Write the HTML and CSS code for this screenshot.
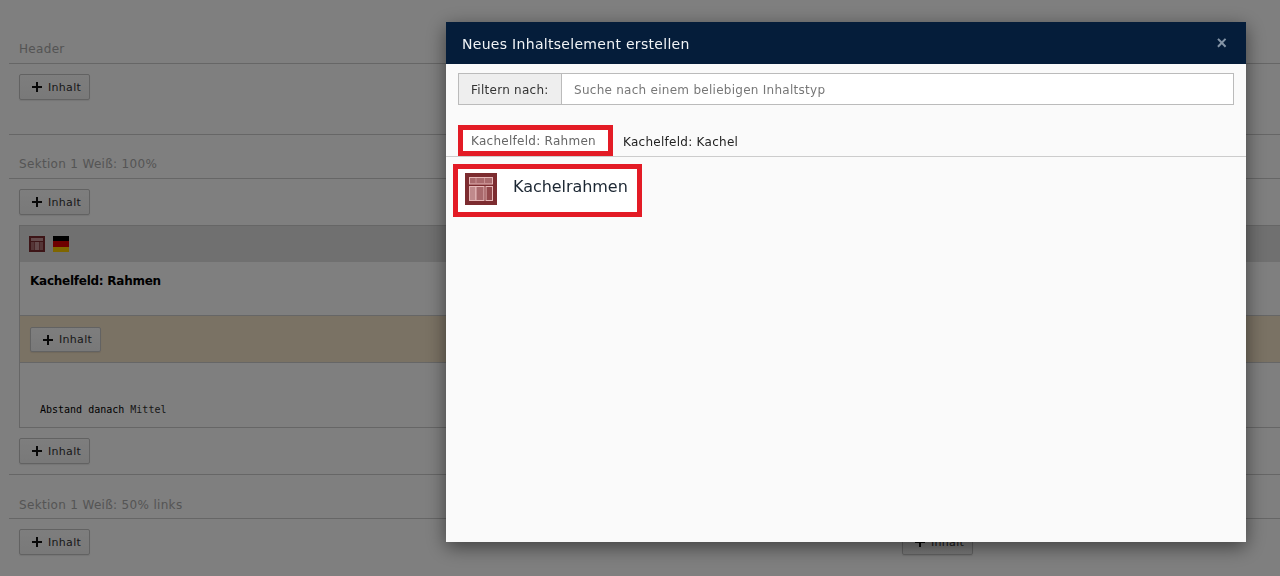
FILE: index.html
```html
<!DOCTYPE html>
<html lang="de">
<head>
<meta charset="utf-8">
<title>Neues Inhaltselement erstellen</title>
<link rel="stylesheet" href="styles.css">
</head>
<body>
<svg class="defs" width="0" height="0" aria-hidden="true">
  <symbol id="tile" viewBox="0 0 32 32">
    <rect width="32" height="32" fill="#7c2c30"/>
    <rect x="4.5" y="4.5" width="23" height="6.5" fill="#a9696c" stroke="#e6b9b9"/>
    <path d="M11 5v6M19.5 5v6" stroke="#c99092"/>
    <rect x="4.5" y="13.5" width="6.5" height="14" fill="#c08a8c" stroke="#e6b9b9"/>
    <rect x="11" y="13.5" width="8" height="14" fill="#a9696c" stroke="#e6b9b9"/>
    <rect x="21" y="13.5" width="6.5" height="14" fill="#93484b" stroke="#e6b9b9"/>
  </symbol>
  <symbol id="tile-small" viewBox="0 0 16 16">
    <rect width="16" height="16" fill="#7a2a2e"/>
    <rect x="2" y="2" width="12" height="3" fill="#c79497"/>
    <rect x="2" y="6" width="3.5" height="8" fill="#ab6c6f"/>
    <rect x="6" y="6" width="4" height="8" fill="#c79497"/>
    <rect x="10.5" y="6" width="3.5" height="8" fill="#ab6c6f"/>
  </symbol>
  <symbol id="plus" viewBox="0 0 10 10">
    <path d="M4 0h2v4h4v2H6v4H4V6H0V4h4z" fill="#111"/>
  </symbol>
</svg>

<div class="page">
  <div class="col">
    <section class="sec">
      <h2 class="sec-title sec-title-first">Header</h2>
      <div class="sec-body sec-body-empty">
        <button class="btn"><svg class="btn-plus"><use href="#plus"/></svg>Inhalt</button>
      </div>
    </section>
    <section class="sec">
      <h2 class="sec-title">Sektion 1 Weiß: 100%</h2>
      <div class="sec-body">
        <button class="btn"><svg class="btn-plus"><use href="#plus"/></svg>Inhalt</button>
        <article class="panel">
          <div class="panel-head">
            <svg class="ico"><use href="#tile-small"/></svg>
            <span class="flag"><i class="band band-k"></i><i class="band band-r"></i><i class="band band-g"></i></span>
          </div>
          <div class="panel-body"><strong>Kachelfeld: Rahmen</strong></div>
          <div class="panel-drop">
            <button class="btn btn-nested"><svg class="btn-plus"><use href="#plus"/></svg>Inhalt</button>
          </div>
          <div class="panel-foot"><span class="foot-key">Abstand danach</span> Mittel</div>
        </article>
        <button class="btn"><svg class="btn-plus"><use href="#plus"/></svg>Inhalt</button>
      </div>
    </section>
    <section class="sec sec-last">
      <h2 class="sec-title">Sektion 1 Weiß: 50% links</h2>
      <div class="sec-body">
        <button class="btn"><svg class="btn-plus"><use href="#plus"/></svg>Inhalt</button>
      </div>
    </section>
  </div>

  <div class="col">
    <section class="sec">
      <h2 class="sec-title sec-title-first">&nbsp;</h2>
      <div class="sec-body sec-body-empty">
        <button class="btn"><svg class="btn-plus"><use href="#plus"/></svg>Inhalt</button>
      </div>
    </section>
    <section class="sec">
      <h2 class="sec-title">&nbsp;</h2>
      <div class="sec-body">
        <button class="btn"><svg class="btn-plus"><use href="#plus"/></svg>Inhalt</button>
        <article class="panel">
          <div class="panel-head">
            <svg class="ico"><use href="#tile-small"/></svg>
          </div>
          <div class="panel-body"></div>
          <div class="panel-drop">
            <button class="btn btn-nested"><svg class="btn-plus"><use href="#plus"/></svg>Inhalt</button>
          </div>
          <div class="panel-foot">&nbsp;</div>
        </article>
        <button class="btn"><svg class="btn-plus"><use href="#plus"/></svg>Inhalt</button>
      </div>
    </section>
    <section class="sec sec-last">
      <h2 class="sec-title">&nbsp;</h2>
      <div class="sec-body">
        <button class="btn"><svg class="btn-plus"><use href="#plus"/></svg>Inhalt</button>
      </div>
    </section>
  </div>
</div>

<div class="backdrop"></div>

<div class="modal">
  <header class="modal-head">
    <span class="modal-title">Neues Inhaltselement erstellen</span>
    <span class="modal-close">×</span>
  </header>
  <div class="filter">
    <label class="filter-label">Filtern nach:</label>
    <span class="filter-input">Suche nach einem beliebigen Inhaltstyp</span>
  </div>
  <nav class="tabs">
    <span class="tab tab-active">Kachelfeld: Rahmen</span>
    <span class="tab">Kachelfeld: Kachel</span>
  </nav>
  <div class="pane">
    <div class="item">
      <svg class="item-ico"><use href="#tile"/></svg>
      <span class="item-name">Kachelrahmen</span>
    </div>
  </div>
</div>
</body>
</html>
```
FILE: styles.css
```css
html, body {
  margin: 0;
  height: 576px;
  overflow: hidden;
}
body {
  background: #fefefe;
  font-family: "DejaVu Sans", Verdana, sans-serif;
  font-size: 12px;
  letter-spacing: .27px;
  color: #222;
}
.defs { position: absolute; }

.page {
  display: grid;
  grid-template-columns: 873px 408px;
  gap: 10px;
  width: 1300px;
  padding-left: 9px;
}
.col { min-width: 0; }

.sec { border-bottom: 1px solid #ccc; }
.sec-last { border-bottom: 0; }
.sec-title {
  margin: 0;
  padding: 20px 10px 5px;
  border-bottom: 1px solid #ccc;
  font-size: 12px;
  font-weight: 400;
  line-height: 18px;
  letter-spacing: .32px;
  color: #aaa;
}
.sec-title-first { padding-top: 40px; color: #a8a8a8; }
.sec-body {
  display: flex;
  flex-direction: column;
  align-items: flex-start;
  gap: 10px;
  padding: 10px;
}
.sec-body-empty { padding-bottom: 34px; }
.sec-last .sec-title { padding-top: 21px; padding-bottom: 4px; }

.btn {
  display: flex;
  align-items: center;
  gap: 6px;
  box-sizing: border-box;
  width: 71px;
  height: 26px;
  padding: 0 0 0 12px;
  background: linear-gradient(#fcfcfc, #f2f2f2);
  border: 1px solid #c4c4c4;
  border-radius: 2px;
  box-shadow: 0 1px 1px rgba(0, 0, 0, .08);
  font: 11px/1 "DejaVu Sans", Verdana, sans-serif;
  letter-spacing: .3px;
  color: #333;
}
.btn-nested { height: 25px; }
.btn-plus { width: 10px; height: 10px; flex: none; }

.panel {
  box-sizing: border-box;
  align-self: stretch;
  height: 203px;
  border: 1px solid #ccc;
  background: #ffffff;
}
.panel-head {
  display: flex;
  gap: 8px;
  box-sizing: border-box;
  height: 36px;
  padding: 10px 9px;
  background: #e0e0e0;
}
.ico { width: 16px; height: 16px; }
.flag { display: flex; flex-direction: column; width: 16px; height: 16px; }
.band { flex: 1; }
.band-k { background: #000; }
.band-r { background: #d00; }
.band-g { background: #fc0; }

.panel-body {
  box-sizing: border-box;
  height: 53px;
  padding: 10px 10px 0;
  line-height: 18px;
  letter-spacing: -.25px;
  color: #000;
}
.panel-drop {
  box-sizing: border-box;
  height: 48px;
  padding: 11px 10px 0;
  background: #f5e4c8;
  border-top: 1px solid #ccc;
  border-bottom: 1px solid #ccc;
}
.panel-foot {
  padding: 38px 20px 0;
  font: 10px/18px "DejaVu Sans Mono", "Liberation Mono", monospace;
  letter-spacing: 0;
  color: #333;
}
.foot-key { color: #000; }

.backdrop {
  position: fixed;
  inset: 0;
  background: rgba(0, 0, 0, .5);
}

.modal {
  position: fixed;
  left: 446px;
  top: 22px;
  width: 800px;
  height: 520px;
  background: #fafafa;
  box-shadow: 0 5px 18px rgba(0, 0, 0, .5);
}
.modal-head {
  display: flex;
  justify-content: space-between;
  align-items: center;
  box-sizing: border-box;
  height: 42px;
  padding: 1px 19px 0 16px;
  background: #051d3a;
  color: #fff;
}
.modal-title { font-size: 14px; letter-spacing: .3px; color: #f0f3f6; }
.modal-close {
  font-family: "Liberation Sans", Arial, sans-serif;
  font-size: 18px;
  font-weight: 700;
  letter-spacing: 0;
  color: #8494a6;
}

.filter {
  display: flex;
  margin: 9px 12px 0;
  height: 32px;
  box-sizing: border-box;
  border: 1px solid #bbb;
  line-height: 32px;
}
.filter-label {
  box-sizing: border-box;
  width: 103px;
  padding-left: 12px;
  background: #eee;
  border-right: 1px solid #bbb;
  color: #333;
}
.filter-input {
  flex: 1;
  padding-left: 12px;
  background: #fff;
  color: #777;
}

.tabs {
  display: flex;
  align-items: stretch;
  margin-top: 20px;
  padding-left: 12px;
  height: 32px;
  box-sizing: border-box;
  border-bottom: 1px solid #ccc;
}
.tab {
  display: flex;
  align-items: center;
  padding: 2px 0 0 10px;
  color: #222;
}
.tab-active {
  box-sizing: border-box;
  width: 155px;
  height: 31px;
  padding: 1px 0 0 8px;
  background: #fff;
  border: 5px solid #e31b25;
  color: #666;
}

.pane { padding: 7px 7px 0; }
.item {
  display: flex;
  align-items: flex-start;
  gap: 16px;
  box-sizing: border-box;
  width: 189px;
  height: 53px;
  padding: 4px 0 0 7px;
  background: #fff;
  border: 5px solid #e31b25;
}
.item-ico { width: 32px; height: 32px; flex: none; }
.item-name {
  margin-top: 5px;
  font-size: 16px;
  line-height: 18px;
  letter-spacing: -.05px;
  color: #1c2733;
}
```
